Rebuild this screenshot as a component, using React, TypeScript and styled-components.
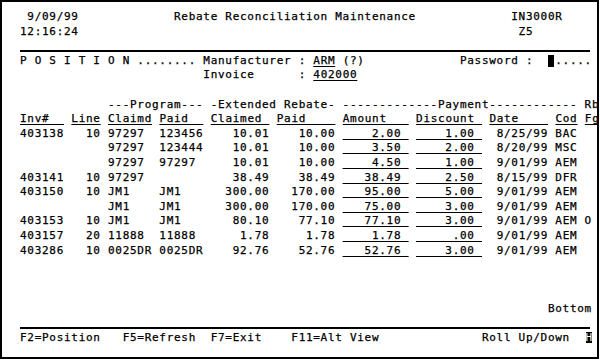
import React from 'react';
import styled, { createGlobalStyle } from 'styled-components';

const GlobalStyle = createGlobalStyle`
  html, body { margin: 0; padding: 0; background: #fff; }
  body { font-family: "DejaVu Sans Mono", monospace; }
`;

const Screen = styled.div`
  width: 599px;
  height: 359px;
  box-sizing: border-box;
  border: 2px solid #000;
  padding: 8px 0 0 10.67px;
  font-family: "DejaVu Sans Mono", monospace;
  font-size: 11px;
  letter-spacing: 0.71px;
  color: #000;
  -webkit-text-stroke: 0.25px #000;
  background: #fff;
  overflow: hidden;
`;

const Row = styled.div`
  height: 14.6px;
  line-height: 14.6px;
  white-space: pre;
`;

const Field = styled.span`
  text-decoration: underline;
  text-decoration-thickness: 1px;
  text-underline-offset: 1.5px;
`;

const Rule = styled.div`
  height: 14.6px;
  box-sizing: border-box;
  padding: 10.5px 0 0 7.33px;
  &::after {
    content: '';
    display: block;
    width: 570px;
    height: 2px;
    background: #000;
  }
`;

const Cursor = styled.span`
  display: inline-block;
  width: 6px;
  height: 12px;
  margin-right: 1.33px;
  background: #000;
  vertical-align: -3px;
`;

const Reverse = styled.span`
  display: inline-block;
  width: 6px;
  margin-left: 1px;
  margin-right: 0.33px;
  height: 11px;
  line-height: 11px;
  letter-spacing: 0;
  text-align: center;
  background: #000;
  color: #fff;
  -webkit-text-stroke: 0;
  vertical-align: -2px;
  overflow: hidden;
`;

const L = (s: string, n: number) => s.padEnd(n);
const R = (s: string, n: number) => s.padStart(n);

type Rec = {
  inv: string; line: string; pc: string; pp: string; ec: string; ep: string;
  amt: string; disc: string; date: string; cod: string; fg?: string;
};

const rows: Rec[] = [
  { inv: '403138', line: '10', pc: '97297', pp: '123456', ec: '10.01', ep: '10.00', amt: '2.00', disc: '1.00', date: '8/25/99', cod: 'BAC' },
  { inv: '', line: '', pc: '97297', pp: '123444', ec: '10.01', ep: '10.00', amt: '3.50', disc: '2.00', date: '8/20/99', cod: 'MSC' },
  { inv: '', line: '', pc: '97297', pp: '97297', ec: '10.01', ep: '10.00', amt: '4.50', disc: '1.00', date: '9/01/99', cod: 'AEM' },
  { inv: '403141', line: '10', pc: '97297', pp: '', ec: '38.49', ep: '38.49', amt: '38.49', disc: '2.50', date: '8/15/99', cod: 'DFR' },
  { inv: '403150', line: '10', pc: 'JM1', pp: 'JM1', ec: '300.00', ep: '170.00', amt: '95.00', disc: '5.00', date: '9/01/99', cod: 'AEM' },
  { inv: '', line: '', pc: 'JM1', pp: 'JM1', ec: '300.00', ep: '170.00', amt: '75.00', disc: '3.00', date: '9/01/99', cod: 'AEM' },
  { inv: '403153', line: '10', pc: 'JM1', pp: 'JM1', ec: '80.10', ep: '77.10', amt: '77.10', disc: '3.00', date: '9/01/99', cod: 'AEM', fg: 'O' },
  { inv: '403157', line: '20', pc: '11888', pp: '11888', ec: '1.78', ep: '1.78', amt: '1.78', disc: '.00', date: '9/01/99', cod: 'AEM' },
  { inv: '403286', line: '10', pc: '0025DR', pp: '0025DR', ec: '92.76', ep: '52.76', amt: '52.76', disc: '3.00', date: '9/01/99', cod: 'AEM' },
];

const headers: [string, number][] = [
  ['Inv#', 6], ['Line', 4], ['Claimd', 6], ['Paid', 6], ['Claimed', 8], ['Paid', 8],
  ['Amount', 9], ['Discount', 9], ['Date', 8], ['Cod', 3], ['Fg', 2],
];

export default function App() {
  return (
    <>
      <GlobalStyle />
      <Screen>
        <Row>{'  9/09/99' + ' '.repeat(13) + 'Rebate Reconciliation Maintenance' + ' '.repeat(13) + 'IN3000R'}</Row>
        <Row>{' 12:16:24' + ' '.repeat(60) + 'Z5'}</Row>
        <Rule />
        <Row>
          {' P O S I T I O N ........ Manufacturer : '}
          <Field>ARM</Field>
          {' (?)' + ' '.repeat(13) + 'Password :  '}
          <Cursor />
          {'.....'}
        </Row>
        <Row>
          {' '.repeat(26) + 'Invoice      : '}
          <Field>402000</Field>
        </Row>
        <Row />
        <Row>{' '.repeat(13) + '---Program--- -Extended Rebate- ' + '-'.repeat(13) + 'Payment' + '-'.repeat(12) + ' Rb'}</Row>
        <Row>
          {' '}
          {headers.map(([h, w], i) => (
            <React.Fragment key={i}>
              <Field>{L(h, w)}</Field>
              {i < headers.length - 1 ? ' ' : ''}
            </React.Fragment>
          ))}
        </Row>
        {rows.map((r, i) => (
          <Row key={i}>
            {` ${L(r.inv, 6)} ${R(r.line, 4)} ${L(r.pc, 6)} ${L(r.pp, 6)} ${R(r.ec, 8)} ${R(r.ep, 8)} `}
            <Field>{R(r.amt, 8) + ' '}</Field>
            {' '}
            <Field>{R(r.disc, 8) + ' '}</Field>
            {` ${R(r.date, 8)} ${r.cod}${r.fg ? ' ' + r.fg : ''}`}
          </Row>
        ))}
        <Row />
        <Row />
        <Row />
        <Row>{' '.repeat(73) + 'Bottom'}</Row>
        <Rule />
        <Row>
          {' F2=Position   F5=Refresh  F7=Exit    F11=Alt View' + ' '.repeat(14) + 'Roll Up/Down  '}
          <Reverse>H</Reverse>
        </Row>
        <Row />
      </Screen>
    </>
  );
}
